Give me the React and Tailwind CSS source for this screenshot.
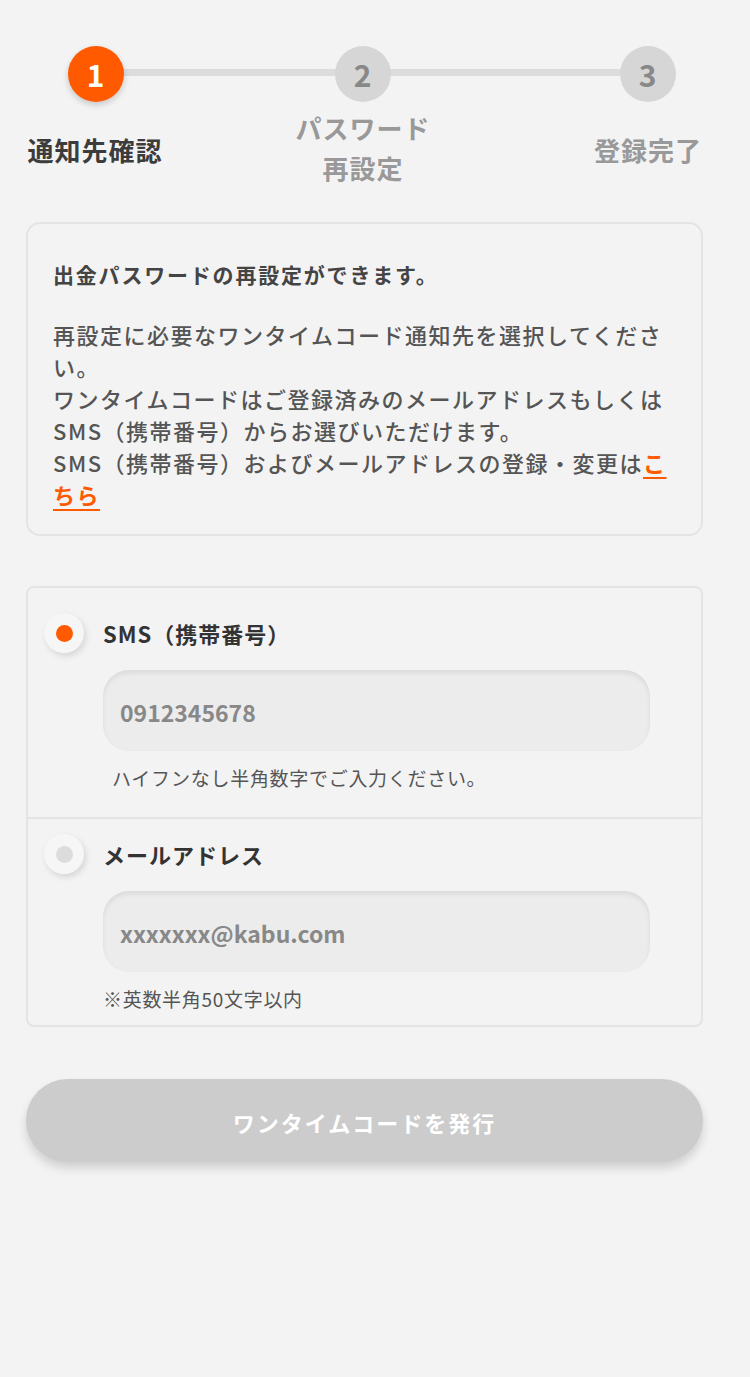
import React, { useState } from "react";

const font = { fontFamily: '"Noto Sans CJK JP", "Noto Sans", sans-serif' };

function Step({ n, active }) {
  return (
    <div
      className={`w-[56px] h-[56px] rounded-full flex items-center justify-center text-[30px] font-bold ${
        active
          ? "bg-[#ff5a00] text-white shadow-[0_3px_6px_rgba(0,0,0,0.18)]"
          : "bg-[#d6d6d6] text-[#888]"
      }`}
    >
      {n}
    </div>
  );
}

function Radio({ checked, onClick }) {
  return (
    <button
      onClick={onClick}
      className="w-[40px] h-[40px] shrink-0 rounded-full bg-[#f6f6f6] shadow-[2px_3px_6px_rgba(0,0,0,0.12)] flex items-center justify-center"
    >
      <span
        className={`w-[17px] h-[17px] rounded-full ${checked ? "bg-[#ff5a00]" : "bg-[#dcdcdc]"}`}
      />
    </button>
  );
}

function Option({ label, placeholder, hint, checked, onSelect, pad, hintClass }) {
  return (
    <div className={pad}>
      <div className="flex items-center pl-[16px] gap-[19px]">
        <Radio checked={checked} onClick={onSelect} />
        <span className="text-[22px] font-bold text-[#333] tracking-[1px]">{label}</span>
      </div>
      <div className="pl-[75px] pr-[51px] mt-[17px]">
        <div className="h-[81px] rounded-[26px] bg-[#ececec] shadow-[inset_0_3px_5px_rgba(0,0,0,0.08)] flex items-center px-[17px] pt-[4px]">
          <span className="text-[23px] font-bold text-[#888]">{placeholder}</span>
        </div>
      </div>
      <div className={`mt-[14px] text-[19px] leading-[26px] tracking-[0.7px] text-[#555] ${hintClass}`}>
        {hint}
      </div>
    </div>
  );
}

export default function App() {
  const [sel, setSel] = useState("sms");

  return (
    <div style={font} className="w-[750px] min-h-[1377px] bg-[#f3f3f3] text-[#444]">
      {/* stepper */}
      <div className="relative pt-[46px] flex items-start text-[26px] font-bold leading-[40px] tracking-[1px]">
        <div className="absolute left-[96px] w-[552px] top-[69px] h-[7px] bg-[#dcdcdc]" />
        <div className="relative ml-[21px] w-[150px] flex flex-col items-center">
          <Step n="1" active />
          <div className="mt-[28px] text-[#3c3c3c] -ml-[2px]">通知先確認</div>
        </div>
        <div className="relative ml-[117px] w-[150px] flex flex-col items-center">
          <Step n="2" />
          <div className="mt-[6px] text-[#999] text-center">
            パスワード
            <br />
            再設定
          </div>
        </div>
        <div className="relative ml-[135px] w-[150px] flex flex-col items-center">
          <Step n="3" />
          <div className="mt-[28px] text-[#999]">登録完了</div>
        </div>
      </div>

      {/* info card */}
      <div className="ml-[26px] w-[677px] mt-[34px] border-2 border-[#e4e4e4] rounded-[14px] px-[25px] pt-[35px] pb-[24px]">
        <p className="text-[21px] leading-[30px] font-bold text-[#444] tracking-[1.8px]">
          出金パスワードの再設定ができます。
        </p>
        <p className="mt-[29px] text-[22px] leading-[32px] text-[#555] font-medium tracking-[1.5px]">
          再設定に必要なワンタイムコード通知先を選択してください。
          <br />
          ワンタイムコードはご登録済みのメールアドレスもしくはSMS（携帯番号）からお選びいただけます。
          <br />
          SMS（携帯番号）およびメールアドレスの登録・変更は
          <a href="#" className="text-[#ff5a00] font-bold underline underline-offset-[5px] decoration-2">
            こちら
          </a>
        </p>
      </div>

      {/* options */}
      <div className="ml-[26px] w-[677px] mt-[50px] border-2 border-[#e4e4e4] rounded-[8px]">
        <div className="border-b-2 border-[#e4e4e4]">
          <Option
            label="SMS（携帯番号）"
            placeholder="0912345678"
            hint="ハイフンなし半角数字でご入力ください。"
            pad="pt-[25px] pb-[26px]"
            hintClass="pl-[84px]"
            checked={sel === "sms"}
            onSelect={() => setSel("sms")}
          />
        </div>
        <Option
          label="メールアドレス"
          placeholder="xxxxxxx@kabu.com"
          hint="※英数半角50文字以内"
          pad="pt-[15px] pb-[13px]"
          hintClass="pl-[75px]"
          checked={sel === "mail"}
          onSelect={() => setSel("mail")}
        />
      </div>

      {/* submit */}
      <div className="ml-[26px] w-[677px] mt-[52px]">
        <button className="w-full h-[83px] rounded-full bg-[#cccccc] text-white text-[22px] font-bold shadow-[0_6px_10px_rgba(0,0,0,0.15)] tracking-[2px] pt-[3px]">
          ワンタイムコードを発行
        </button>
      </div>
    </div>
  );
}
